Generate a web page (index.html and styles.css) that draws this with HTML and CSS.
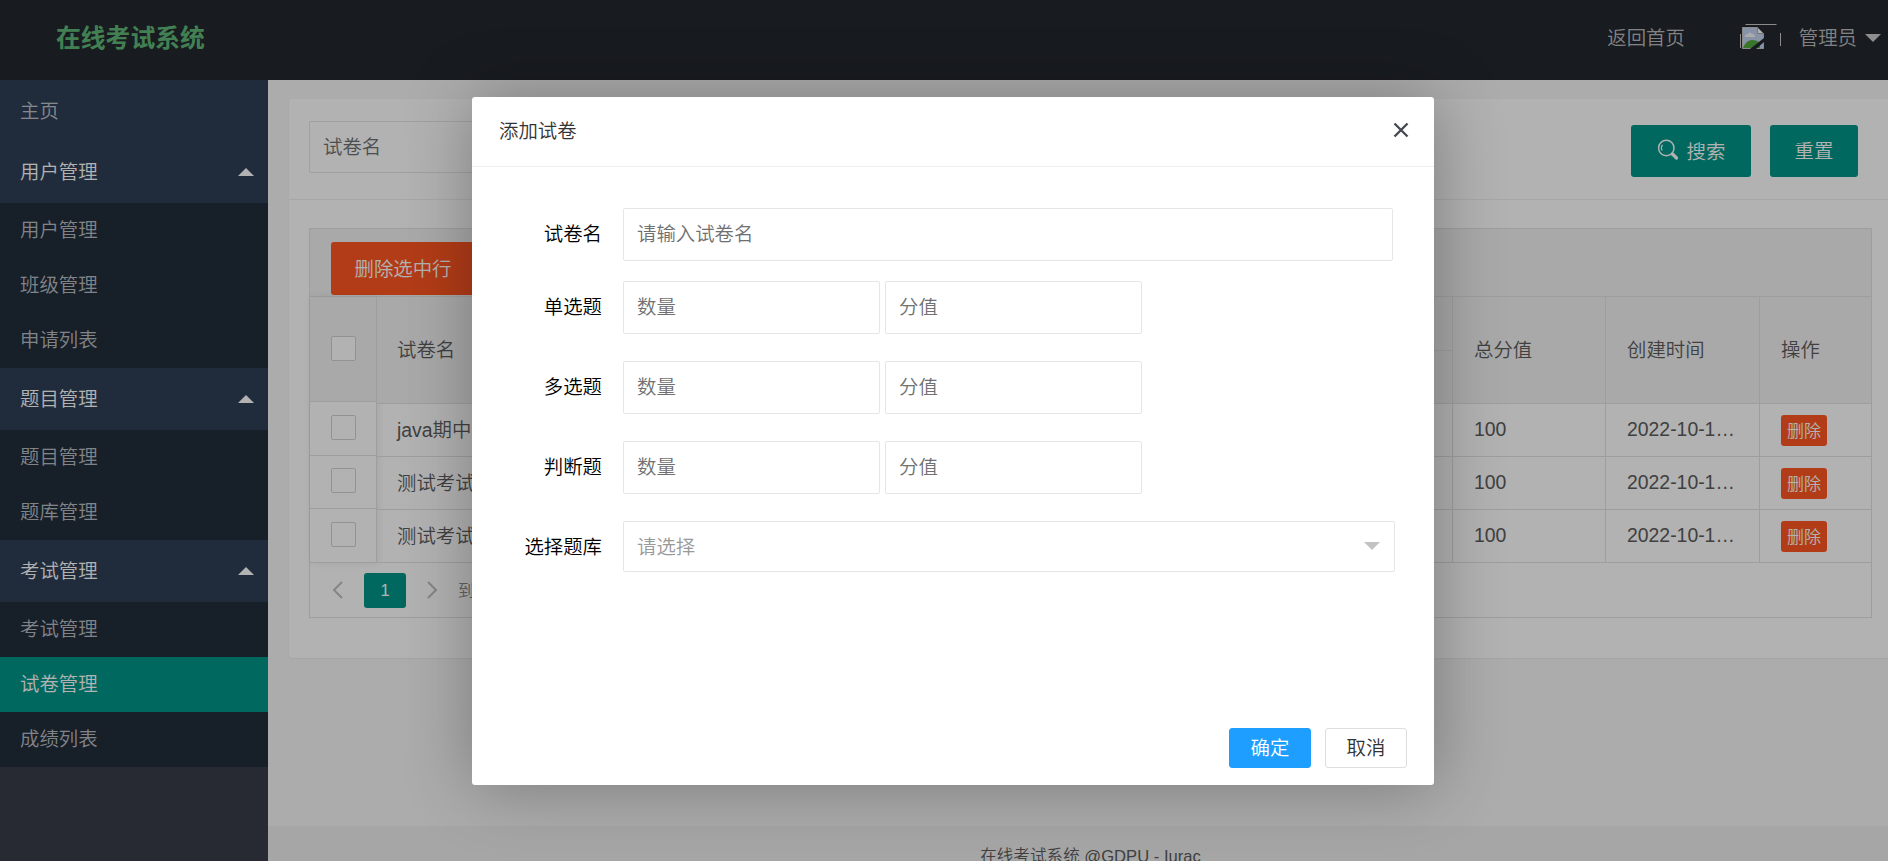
FILE: index.html
```html
<!DOCTYPE html>
<html lang="zh-CN">
<head>
<meta charset="utf-8">
<title>在线考试系统</title>
<link rel="stylesheet" href="styles.css">
</head>
<body>
<div class="app">
  <header class="header">
    <div class="logo">在线考试系统</div>
    <nav class="top-nav">
      <a class="top-link">返回首页</a>
      <a class="user">
        <svg class="avatar" width="42" height="42" viewBox="0 0 42 42">
          <path d="M5.500 0.500h31M.5 10v14M40.500 9v13" stroke="#c8c8c8" fill="none"/>
          <path d="M2.500 3.500h15l6 6v15h-21z" fill="#c3d3f0" stroke="#c4c4c4"/>
          <path d="M17.500 3.500v6h6z" fill="#fff" stroke="#aaa"/>
          <path d="M5 13q0-3 3-3 2-3 4 0 3 0 3 3z" fill="#f5f7fc"/>
          <path d="M3 24q3-8 9-8 5 0 8 3v5z" fill="#55a83f"/>
          <path d="M24 14v4l-8 7h-6z" fill="#23262e"/>
        </svg>
        <span>管理员</span>
        <i class="caret caret-down"></i>
      </a>
    </nav>
  </header>
  <div class="body">
    <aside class="side">
      <ul class="menu">
        <li class="group home">主页</li>
        <li class="group">用户管理<i class="caret caret-up"></i></li>
        <li class="child">用户管理</li>
        <li class="child">班级管理</li>
        <li class="child">申请列表</li>
        <li class="group">题目管理<i class="caret caret-up"></i></li>
        <li class="child">题目管理</li>
        <li class="child">题库管理</li>
        <li class="group">考试管理<i class="caret caret-up"></i></li>
        <li class="child">考试管理</li>
        <li class="child active">试卷管理</li>
        <li class="child">成绩列表</li>
      </ul>
    </aside>
    <main class="main">
      <section class="card">
        <div class="search-bar">
          <input class="input search-input" placeholder="试卷名">
          <div class="search-actions">
            <button class="btn btn-search">
              <svg width="22" height="22" viewBox="0 0 22 22" fill="none" stroke="currentColor">
                <circle cx="9.300" cy="9" r="7.700" stroke-width="1.500"/>
                <path d="M5.300 11.500A4.800 4.800 0 0 1 5.600 5.800" stroke-width="1.200"/>
                <path d="M15.500 15l4 4" stroke-width="3.200" stroke-linecap="round"/>
              </svg>
              搜索</button>
            <button class="btn btn-reset">重置</button>
          </div>
        </div>
        <div class="table">
          <div class="toolbar"><button class="btn btn-danger">删除选中行</button></div>
          <div class="grid">
            <div class="col col-check">
              <div class="cell head"><i class="check"></i></div>
              <div class="cell"><i class="check"></i></div>
              <div class="cell"><i class="check"></i></div>
              <div class="cell"><i class="check"></i></div>
            </div>
            <div class="col col-name">
              <div class="cell head">试卷名</div>
              <div class="cell">java期中考试</div>
              <div class="cell">测试考试</div>
              <div class="cell">测试考试</div>
            </div>
            <div class="col col-kinds">
              <div class="cell head split"></div>
              <div class="cell"></div>
              <div class="cell"></div>
              <div class="cell"></div>
            </div>
            <div class="col col-score">
              <div class="cell head">总分值</div>
              <div class="cell">100</div>
              <div class="cell">100</div>
              <div class="cell">100</div>
            </div>
            <div class="col col-time">
              <div class="cell head">创建时间</div>
              <div class="cell">2022-10-1…</div>
              <div class="cell">2022-10-1…</div>
              <div class="cell">2022-10-1…</div>
            </div>
            <div class="col col-op">
              <div class="cell head">操作</div>
              <div class="cell"><button class="del">删除</button></div>
              <div class="cell"><button class="del">删除</button></div>
              <div class="cell"><button class="del">删除</button></div>
            </div>
          </div>
          <div class="pager">
            <svg width="12" height="18" viewBox="0 0 12 18"><path d="M10 1L2 9l8 8" fill="none" stroke="#bfbfbf" stroke-width="2"/></svg>
            <span class="page">1</span>
            <svg width="12" height="18" viewBox="0 0 12 18"><path d="M2 1l8 8-8 8" fill="none" stroke="#bfbfbf" stroke-width="2"/></svg>
            <span class="goto">到</span>
          </div>
        </div>
      </section>
      <footer class="footer">在线考试系统 @GDPU - Iurac</footer>
    </main>
  </div>
</div>
<div class="shade"></div>
<div class="dialog">
  <div class="dialog-title">
    <span>添加试卷</span>
    <svg width="16" height="16" viewBox="0 0 16 16"><path d="M1.500 1.500l13 13M14.500 1.500l-13 13" stroke="#43474f" stroke-width="2.300"/></svg>
  </div>
  <form class="form">
    <div class="row first"><label>试卷名</label><input class="input full" placeholder="请输入试卷名"></div>
    <div class="row"><label>单选题</label><input class="input half" placeholder="数量"><input class="input half" placeholder="分值"></div>
    <div class="row"><label>多选题</label><input class="input half" placeholder="数量"><input class="input half" placeholder="分值"></div>
    <div class="row"><label>判断题</label><input class="input half" placeholder="数量"><input class="input half" placeholder="分值"></div>
    <div class="row"><label>选择题库</label><div class="input select"><span>请选择</span><i class="caret caret-select"></i></div></div>
  </form>
  <div class="dialog-actions">
    <button class="action primary">确定</button>
    <button class="action">取消</button>
  </div>
</div>
</body>
</html>
```
FILE: styles.css
```css
* { box-sizing: border-box; }
body, button, input {
  font-family: "Liberation Sans", "Noto Sans CJK SC", sans-serif;
  font-size: 19.4px;
  font-weight: 350;
}
body { margin: 0; height: 861px; overflow: hidden; color: #5c5c5c; }
ul { list-style: none; margin: 0; padding: 0; }
button { border: 0; padding: 0 0 3px; }
i { font-style: normal; }

.app { height: 861px; display: flex; flex-direction: column; overflow: hidden; }
.header {
  height: 80px; flex: none; background: #23282e;
  display: flex; justify-content: space-between; padding: 0 7px 0 56px;
}
.logo { font-size: 24.8px; font-weight: 700; line-height: 77px; color: #5fb878; }
.top-nav { display: flex; line-height: 76px; color: rgba(255,255,255,.7); }
.top-link { margin-right: 55px; }
.user { display: flex; }
.avatar { margin: 24px 17px 0 0; }

.caret { width: 0; height: 0; border: 8px solid transparent; }
.caret-down { border-top-color: #ccc; margin: 34px 0 0 8px; }
.caret-up { border-bottom-color: #fff; margin-top: -4px; }
.caret-select { border-top-color: #c2c2c2; margin: 7px 1px 0 0; }

.body { flex: 1; min-height: 0; display: flex; }
.side { width: 268px; flex: none; background: #393d49; }
.menu { background: #2f4056; color: rgba(255,255,255,.7); }
.group {
  height: 62px; padding: 0 14px 4px 20px; color: #fff;
  display: flex; align-items: center; justify-content: space-between;
}
.home { height: 61px; padding-bottom: 3px; color: rgba(255,255,255,.7); }
.child { height: 55px; line-height: 55px; padding-left: 20px; background: #212d3c; }
.active { background: #009688; color: #fff; }

.main { width: 1625px; flex: none; background: #f7f7f7; display: flex; flex-direction: column; padding-top: 19px; }
.card { width: 1604px; height: 559px; flex: none; margin-left: 21px; background: #fff; border-radius: 3px; box-shadow: 0 1px 2px rgba(0,0,0,.05); }
.search-bar {
  height: 101px; border-bottom: 1px solid #f0f0f0; padding: 22px 35px 0 20px;
  display: flex; justify-content: space-between;
}
.input {
  height: 52px; border: 1px solid #e6e6e6; border-radius: 2px; background: #fff;
  padding: 0 13px; outline: 0; min-width: 0;
}
.input::placeholder { color: #707070; opacity: 1; }
.search-input { width: 262px; }
.search-actions { display: flex; gap: 19px; padding-top: 4px; }
.btn { height: 52px; border-radius: 3px; background: #009688; color: #fff; }
.btn-search { width: 120px; display: flex; align-items: center; justify-content: center; gap: 8px; padding-bottom: 2px; }
.btn-reset { width: 88px; }
.btn-danger { width: 144px; height: 53px; background: #ff5722; }

.table { margin: 28px 0 0 20px; width: 1563px; height: 390px; border: 1px solid #e2e2e2; }
.toolbar { height: 68px; padding: 13px 0 0 21px; background: #f2f2f2; border-bottom: 1px solid #e2e2e2; }
.grid { display: flex; }
.col { border-right: 1px solid #e2e2e2; flex: none; }
.cell {
  height: 53px; padding: 0 0 2px 20px; border-bottom: 1px solid #e2e2e2;
  display: flex; align-items: center; white-space: nowrap;
}
.head { height: 107px; background: #f2f2f2; padding-bottom: 3px; }
.col-check { width: 67px; box-shadow: 1px 0 8px rgba(0,0,0,.08); }
.col-check .cell { height: 53.5px; padding-left: 21px; }
.col-check .head { height: 105px; padding-bottom: 2px; }
.col-name { width: 153px; }
.col-name .cell:not(.head) { padding-bottom: 3px; }
.col-kinds { width: 923px; }
.split { background: linear-gradient(#e2e2e2, #e2e2e2) 0 53px / 100% 1px no-repeat #f2f2f2; }
.col-score { width: 153px; }
.col-time { width: 154px; }
.col-score .cell, .col-time .cell { padding-left: 21px; }
.col-score .cell:not(.head), .col-time .cell:not(.head) { padding-bottom: 1px; }
.col-op { width: 111px; border-right: 0; }
.col-op .cell { padding-left: 21px; }
.check { width: 25px; height: 25px; border: 1px solid #d2d2d2; border-radius: 2px; background: #fff; }
.del { width: 46px; height: 31px; border-radius: 3px; background: #ff5722; color: #fff; font-size: 17px; margin-top: 2px; padding-bottom: 1px; }
.pager { height: 54px; display: flex; align-items: center; padding: 0 0 0 22px; font-size: 16.5px; color: #8c8c8c; }
.page {
  width: 42px; height: 35px; margin: 0 20px 0 20px; border-radius: 3px;
  background: #009688; color: #fff; text-align: center; line-height: 35px;
}
.goto { margin-left: 20px; }
.footer {
  margin-top: 168px; height: 61px; flex: none; background: #eee;
  text-align: center; line-height: 61px; font-size: 16.6px; padding-left: 20px;
}

.shade { position: absolute; inset: 0; background: #000; opacity: .3; }
.dialog {
  position: absolute; left: 472px; top: 97px; width: 962px; height: 688px;
  background: #fff; border-radius: 3px; box-shadow: 1px 1px 69px rgba(0,0,0,.3);
  display: flex; flex-direction: column;
}
.dialog-title {
  height: 70px; border-bottom: 1px solid #eee; padding: 0 25px 3px 27px; color: #333;
  display: flex; justify-content: space-between; align-items: center;
}
.dialog-title span { padding-bottom: 2px; }
.form { flex: 1; padding-top: 41px; }
.row { display: flex; gap: 5px; align-items: center; height: 53px; margin-bottom: 27px; color: #000; }
.row.first { margin-bottom: 20px; }
.row label { width: 130px; margin-right: 16px; padding-bottom: 4px; text-align: right; }
.full { width: 770px; height: 53px; }
.half { width: 257px; height: 53px; }
.select { width: 772px; height: 51px; margin-top: -2px; color: #999; display: flex; align-items: center; justify-content: space-between; }
.select span { padding-bottom: 2px; }
.dialog-actions { height: 57px; display: flex; justify-content: flex-end; gap: 14px; padding-right: 27px; }
.action {
  width: 82px; height: 40px; border: 1px solid #dedede; border-radius: 3px;
  background: #fff; color: #333;
}
.primary { background: #1e9fff; border-color: #1e9fff; color: #fff; }
```
